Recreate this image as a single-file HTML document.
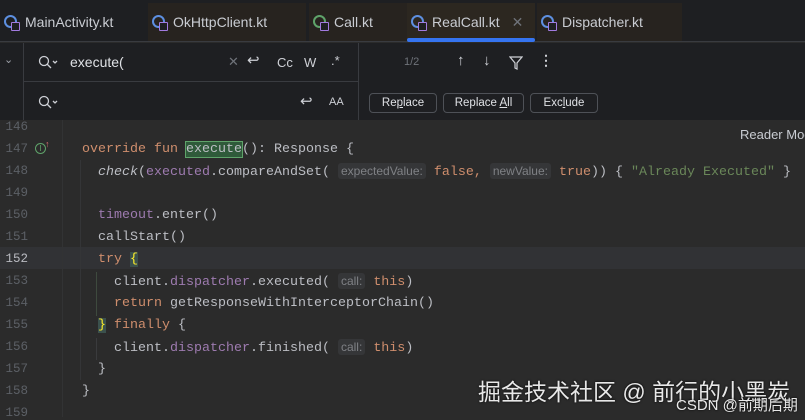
<!DOCTYPE html>
<html><head><meta charset="utf-8"><style>
*{margin:0;padding:0;box-sizing:border-box}
body{width:805px;height:417px;overflow:hidden;background:#2b2b2b;font-family:"Liberation Sans",sans-serif;position:relative}
.tabs{position:absolute;left:0;top:0;width:805px;height:42px;background:#1e1f22;border-bottom:1px solid #393b40}
.tab{position:absolute;top:3px;height:38px;color:#c9ccd2;font-size:14px;line-height:38px;padding-left:25px}
.tab .ic{position:absolute;left:4px;top:12px;width:13px;height:13px;border:2px solid #5d8fe0;border-radius:50%}
.tab .ic:after{content:"";position:absolute;left:5px;top:5px;width:7px;height:7px;background:#1e1f22;border:1.5px solid #a27be0;border-radius:1px}
.search{position:absolute;left:0;top:43px;width:805px;height:77px;background:#1e1f22}
.ln{position:absolute;left:0;width:28px;text-align:right;color:#5c6066;font-family:"Liberation Mono",monospace;font-size:12.5px}
.cl{position:absolute;white-space:pre;color:#bcbec4;font-family:"Liberation Mono",monospace;font-size:13.33px}
.k{color:#cf8e6d}.p{color:#9e7bb0}.s{color:#6a8759}
.hint{background:#353638;color:#7f8185;font-family:"Liberation Sans",sans-serif;font-size:12px;border-radius:3px;padding:1px 3px}
.btn{position:absolute;top:93px;height:20px;border:1px solid #4e5157;border-radius:4px;color:#dfe1e5;font-size:11.5px;line-height:18px;text-align:center}
</style></head><body>
<div class="tabs">
 <div class="tab" style="left:0;width:146px;background:#1e1f22"><span class="ic"></span>MainActivity.kt</div>
 <div class="tab" style="left:148px;width:158px;background:#27231f"><span class="ic"></span>OkHttpClient.kt</div>
 <div class="tab" style="left:309px;width:98px;background:#27231f"><span class="ic" style="border-color:#5fa36a"></span>Call.kt</div>
 <div class="tab" style="left:407px;width:128px;background:#2c2720"><span class="ic"></span>RealCall.kt <span style="color:#6f737a;margin-left:8px">✕</span>
  <div style="position:absolute;left:0;right:0;bottom:-1px;height:4px;background:#3574f0;border-radius:2px"></div></div>
 <div class="tab" style="left:537px;width:145px;background:#27231f"><span class="ic"></span>Dispatcher.kt</div>
</div>
<div class="search">
 <div style="position:absolute;left:23px;top:0;width:1px;height:77px;background:#393b40"></div>
 <div style="position:absolute;left:23px;top:38px;width:335px;height:1px;background:#393b40"></div>
 <div style="position:absolute;left:358px;top:0;width:1px;height:77px;background:#393b40"></div>
 <div style="position:absolute;left:4px;top:10px;color:#9da0a8;font-size:11px">⌄</div>
 <svg style="position:absolute;left:38px;top:12px" width="20" height="14"><circle cx="6" cy="6" r="4.5" fill="none" stroke="#ced0d6" stroke-width="1.3"/><path d="M9 9l4 4M15 6l2 2 2-2" stroke="#ced0d6" stroke-width="1.3" fill="none"/></svg>
 <svg style="position:absolute;left:38px;top:52px" width="20" height="14"><circle cx="6" cy="6" r="4.5" fill="none" stroke="#ced0d6" stroke-width="1.3"/><path d="M9 9l4 4M15 6l2 2 2-2" stroke="#ced0d6" stroke-width="1.3" fill="none"/></svg>
 <div style="position:absolute;left:70px;top:11px;color:#dfe1e5;font-size:14px">execute(</div>
 <div style="position:absolute;left:228px;top:11px;color:#6f737a;font-size:13px">✕</div>
 <div style="position:absolute;left:247px;top:8px;color:#ced0d6;font-size:15px">↩</div>
 <div style="position:absolute;left:277px;top:12px;color:#ced0d6;font-size:13px">Cc</div>
 <div style="position:absolute;left:304px;top:12px;color:#ced0d6;font-size:13px">W</div>
 <div style="position:absolute;left:331px;top:10px;color:#ced0d6;font-size:13px">.*</div>
 <div style="position:absolute;left:300px;top:49px;color:#ced0d6;font-size:15px">↩</div>
 <div style="position:absolute;left:329px;top:53px;color:#ced0d6;font-size:11px">AA</div>
 <div style="position:absolute;left:404px;top:13px;color:#6f737a;font-size:11px">1/2</div>
 <div style="position:absolute;left:457px;top:9px;color:#ced0d6;font-size:15px">↑</div>
 <div style="position:absolute;left:483px;top:9px;color:#ced0d6;font-size:15px">↓</div>
 <svg style="position:absolute;left:509px;top:13px" width="14" height="14"><path d="M1 1h12L8 7v6L6 12V7z" fill="none" stroke="#ced0d6" stroke-width="1.2"/></svg>
 <div style="position:absolute;left:539px;top:9px;color:#ced0d6;font-size:14px;font-weight:bold">⋮</div>
</div>
<div class="btn" style="left:369px;width:68px">Re<u>p</u>lace</div>
<div class="btn" style="left:443px;width:81px">Replace <u>A</u>ll</div>
<div class="btn" style="left:530px;width:68px">Exc<u>l</u>ude</div>
<div style="position:absolute;left:0;top:247px;width:805px;height:22px;background:#313235"></div>
<div style="position:absolute;left:62px;top:120px;width:1px;height:297px;background:#323334"></div>
<div style="position:absolute;left:740px;top:127px;color:#c9ccd2;font-size:13px;white-space:nowrap">Reader Mode</div>
<div class="ln" style="top:120px">146</div>
<div class="ln" style="top:142px">147</div>
<div class="ln" style="top:164px">148</div>
<div class="ln" style="top:186px">149</div>
<div class="ln" style="top:208px">150</div>
<div class="ln" style="top:230px">151</div>
<div class="ln" style="top:252px;color:#b8bac0">152</div>
<div class="ln" style="top:274px">153</div>
<div class="ln" style="top:296px">154</div>
<div class="ln" style="top:318px">155</div>
<div class="ln" style="top:340px">156</div>
<div class="ln" style="top:362px">157</div>
<div class="ln" style="top:384px">158</div>
<div class="ln" style="top:406px">159</div>
<div style="position:absolute;left:35px;top:143px;width:11px;height:11px;border:1.3px solid #5fa36a;border-radius:50%;color:#5fa36a;font-size:8px;line-height:9px;text-align:center">I</div>
<div style="position:absolute;left:45px;top:139px;color:#e06c75;font-size:9px">↑</div>
<div style="position:absolute;left:96px;top:272px;width:1px;height:44px;background:#3e4a3e"></div>
<div style="position:absolute;left:96px;top:338px;width:1px;height:22px;background:#3a3b3d"></div>
<div style="position:absolute;left:80px;top:160px;width:1px;height:220px;background:#343537"></div>
<div class="cl" style="left:82px;top:142px"><span class="k">override fun </span><span style="outline:1px solid #5fa36a;background:#2f5a3a">execute</span>(): Response {</div>
<div class="cl" style="left:98px;top:164px"><i>check</i>(<span class="p">executed</span>.compareAndSet( <span class="hint">expectedValue:</span> <span class="k">false,</span> <span class="hint">newValue:</span> <span class="k">true</span>)) { <span class="s">"Already Executed"</span> }</div>
<div class="cl" style="left:98px;top:208px"><span class="p">timeout</span>.enter()</div>
<div class="cl" style="left:98px;top:230px">callStart()</div>
<div class="cl" style="left:98px;top:252px"><span class="k">try</span> <span style="background:#3b514d;color:#ffef28">{</span></div>
<div class="cl" style="left:114px;top:274px">client.<span class="p">dispatcher</span>.executed( <span class="hint">call:</span> <span class="k">this</span>)</div>
<div class="cl" style="left:114px;top:296px"><span class="k">return</span> getResponseWithInterceptorChain()</div>
<div class="cl" style="left:98px;top:318px"><span style="background:#3b514d;color:#ffef28">}</span> <span class="k">finally</span> {</div>
<div class="cl" style="left:114px;top:340px">client.<span class="p">dispatcher</span>.finished( <span class="hint">call:</span> <span class="k">this</span>)</div>
<div class="cl" style="left:98px;top:362px">}</div>
<div class="cl" style="left:82px;top:384px">}</div>
<div style="position:absolute;left:478px;top:373px;color:#e8e8e8;font-size:23px;font-family:'Liberation Sans','Noto Sans CJK SC',sans-serif;text-shadow:0 0 2px #000;white-space:nowrap">掘金技术社区 @ 前行的小黑炭</div>
<div style="position:absolute;left:676px;top:394px;color:#e8e8e8;font-size:15px;font-family:'Liberation Sans','Noto Sans CJK SC',sans-serif;text-shadow:0 0 2px #000;white-space:nowrap">CSDN @前期后期</div>
</body></html>
